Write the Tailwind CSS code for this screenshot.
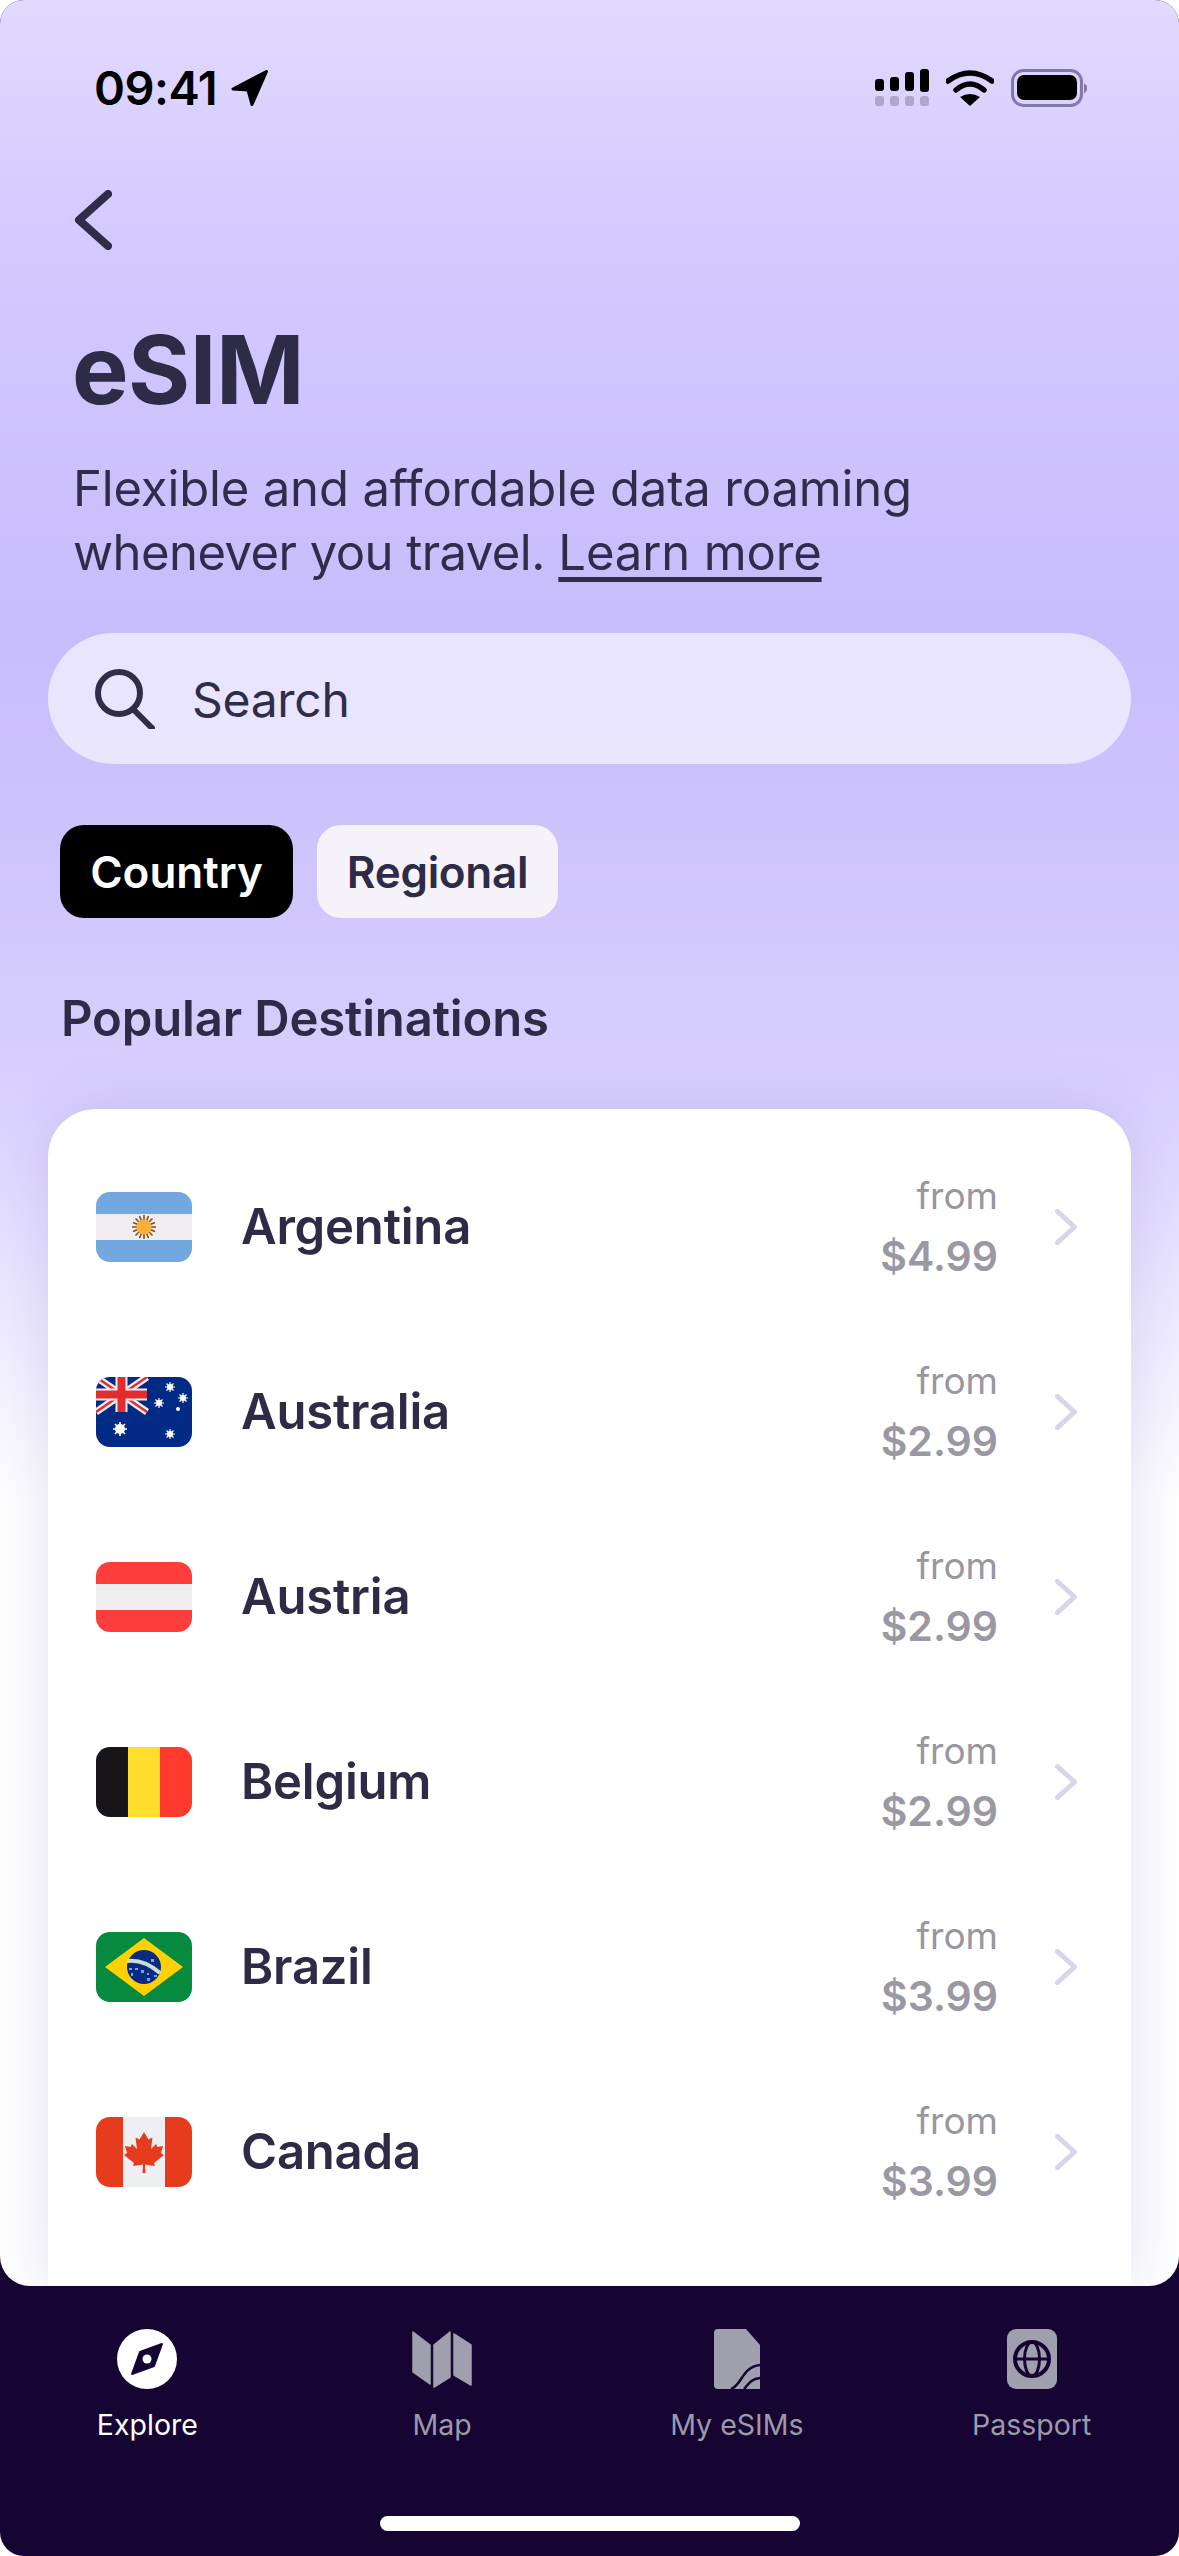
<!DOCTYPE html>
<html><head><meta charset="utf-8"><script src="https://cdn.jsdelivr.net/npm/@tailwindcss/browser@4"></script></head>
<body class="bg-white">
<div class="w-[1179px] h-[2556px] rounded-[24px] overflow-hidden bg-[#160533] flex flex-col font-['Inter',sans-serif]">
<main class="h-[2286px] shrink-0 rounded-b-[30px] overflow-hidden bg-[linear-gradient(180deg,#e3daff_0px,#d5cbff_200px,#cabffc_540px,#c8bdfc_640px,#ccc2fc_800px,#d8cfff_1080px,#ffffff_1500px)] flex flex-col">
  <div class="flex justify-between items-center h-[44px] mt-[66px] pl-[94px] pr-[92px]">
    <div class="flex items-center gap-[14px]">
      <span class="text-[47px] leading-[44px] font-semibold text-black tracking-[-0.5px]">09:41</span>
      <svg width="38" height="36" viewBox="0 0 38 36"><path d="M35.500 1.500 L2 19 L17 20 L21 34.500 Z" fill="#000" stroke="#000" stroke-width="3" stroke-linejoin="round"/></svg>
    </div>
    <div class="flex items-center gap-[17px]">
      <svg width="54" height="38" viewBox="0 0 54 38"><g fill="#000"><rect x="0" y="10" width="9" height="12" rx="3"/><rect x="15" y="8" width="9" height="14" rx="3"/><rect x="30" y="3" width="9" height="19" rx="3"/><rect x="45" y="0" width="9" height="23" rx="3"/></g><g fill="#000" opacity=".2"><rect x="0" y="27" width="9" height="10" rx="3"/><rect x="15" y="27" width="9" height="10" rx="3"/><rect x="30" y="27" width="9" height="10" rx="3"/><rect x="45" y="27" width="9" height="10" rx="3"/></g></svg>
      <svg width="48" height="36" viewBox="0 0 48 36"><path d="M2 11 Q24 -5 46 11" fill="none" stroke="#000" stroke-width="5.500" stroke-linecap="round"/><path d="M10 20 Q24 8 38 20" fill="none" stroke="#000" stroke-width="5.500" stroke-linecap="round"/><path d="M14 27 Q24 21 34 27 L24 36 Z" fill="#000"/></svg>
      <svg width="76" height="38" viewBox="0 0 76 38"><rect x="1.500" y="1.500" width="69" height="35" rx="11" fill="none" stroke="#8577a6" stroke-width="3"/><rect x="6" y="6" width="60" height="25" rx="7" fill="#000"/><path d="M73 14 L76 17 V21 L73 25 Z" fill="#8577a6"/></svg>
    </div>
  </div>
  <svg class="ml-[74px] mt-[80px]" width="38" height="60" viewBox="0 0 38 60"><path d="M34 4 L5 30 L34 56" fill="none" stroke="#2f2d4a" stroke-width="8" stroke-linecap="round" stroke-linejoin="round"/></svg>
  <h1 class="ml-[72px] mt-[70px] text-[95px] leading-[100px] font-bold text-[#2d2b45] tracking-[-0.5px]">eSIM</h1>
  <p class="ml-[73px] mt-[37px] text-[49px] leading-[64px] text-[#2f2d4a] tracking-[-0.15px]">Flexible and affordable data roaming<br><span class="tracking-[-0.55px]">whenever you travel.</span> <span class="underline underline-offset-[7px] decoration-[5px]">Learn more</span></p>
  <div class="mx-[48px] mt-[48px] h-[131px] shrink-0 rounded-full bg-white/60 flex items-center pl-[47px] gap-[37px]">
    <svg width="60" height="60" viewBox="0 0 60 60"><circle cx="24" cy="24" r="21" fill="none" stroke="#2f2d4a" stroke-width="6"/><path d="M39 41 L57 59" stroke="#2f2d4a" stroke-width="6" stroke-linecap="round"/></svg>
    <span class="text-[48px] text-[#2f2d4a] pt-[2px] tracking-[-0.3px]">Search</span>
  </div>
  <div class="flex gap-[24px] ml-[60px] mt-[61px]">
    <div class="w-[233px] h-[93px] rounded-[24px] bg-black text-white text-[44px] font-semibold flex items-center justify-center">Country</div>
    <div class="w-[241px] h-[93px] rounded-[24px] bg-[#f5f3f9] text-[#2d2b45] text-[44px] tracking-[-0.3px] font-semibold flex items-center justify-center">Regional</div>
  </div>
  <h2 class="ml-[61px] mt-[69px] text-[49px] leading-[64px] font-semibold text-[#2d2b45] tracking-[-0.15px]">Popular Destinations</h2>
  <div class="mx-[48px] mt-[58px] flex-1 bg-white rounded-t-[48px] shadow-[0_0_60px_rgba(70,50,140,0.15)] pt-[25px] flex flex-col">
    <div class="flex items-center h-[185px] shrink-0 pl-[48px] pr-[54px]">
      <div class="w-[96px] h-[70px] rounded-[14px] overflow-hidden shrink-0"><svg width="96" height="70" viewBox="0 0 96 70"><rect width="96" height="70" fill="#72a7e0"/><rect y="22" width="96" height="26" fill="#efedf0"/><g stroke="#8a4a10" stroke-width="1.600"><path d="M48 23V47M36 35H60M39.500 26.500L56.500 43.500M56.500 26.500L39.500 43.500M43.500 24L52.500 46M52.500 24L43.500 46M37 30.500L59 39.500M59 30.500L37 39.500"/></g><circle cx="48" cy="35" r="7.500" fill="#f9ae35"/></svg></div>
      <span class="ml-[49px] text-[49px] font-semibold text-[#2d2b45] flex-1 tracking-[-0.2px]">Argentina</span>
      <div class="text-right"><div class="text-[37px] leading-[58px] text-[#98969f]">from</div><div class="text-[41px] leading-[62px] font-semibold text-[#9a98a2]">$4.99</div></div>
      <svg class="ml-[57px]" width="22" height="36" viewBox="0 0 22 36"><path d="M2.500 2.500 L19.500 18 L2.500 33.500" fill="none" stroke="#d8d5ea" stroke-width="5" stroke-linecap="round" stroke-linejoin="round"/></svg>
    </div>
    <div class="flex items-center h-[185px] shrink-0 pl-[48px] pr-[54px]">
      <div class="w-[96px] h-[70px] rounded-[14px] overflow-hidden shrink-0"><svg width="96" height="70" viewBox="0 0 96 70"><rect width="96" height="70" fill="#012a85"/><path d="M0 0L51 35M51 0L0 35" stroke="#efedf0" stroke-width="7"/><path d="M0 0L51 35M51 0L0 35" stroke="#e22d2f" stroke-width="2.400"/><path d="M25.500 0V35M0 17.500H51" stroke="#efedf0" stroke-width="12"/><path d="M25.500 0V35M0 17.500H51" stroke="#e22d2f" stroke-width="8"/><g fill="#fff"><circle cx="24" cy="52" r="5"/><path d="M24 45V59M17 52H31M19 47L29 57M29 47L19 57" stroke="#fff" stroke-width="1.600"/><circle cx="74" cy="10" r="3"/><path d="M74 5V15M69 10H79M70.500 6.500L77.500 13.500M77.500 6.500L70.500 13.500" stroke="#fff" stroke-width="1.200"/><circle cx="63" cy="26" r="3"/><path d="M63 21V31M58 26H68M59.500 22.500L66.500 29.500M66.500 22.500L59.500 29.500" stroke="#fff" stroke-width="1.200"/><circle cx="87" cy="21" r="3"/><path d="M87 16V26M82 21H92M83.500 17.500L90.500 24.500M90.500 17.500L83.500 24.500" stroke="#fff" stroke-width="1.200"/><circle cx="82" cy="32" r="2"/><circle cx="74" cy="57" r="3"/><path d="M74 52V62M69 57H79M70.500 53.500L77.500 60.500M77.500 53.500L70.500 60.500" stroke="#fff" stroke-width="1.200"/></g></svg></div>
      <span class="ml-[49px] text-[49px] font-semibold text-[#2d2b45] flex-1 tracking-[-0.2px]">Australia</span>
      <div class="text-right"><div class="text-[37px] leading-[58px] text-[#98969f]">from</div><div class="text-[41px] leading-[62px] font-semibold text-[#9a98a2]">$2.99</div></div>
      <svg class="ml-[57px]" width="22" height="36" viewBox="0 0 22 36"><path d="M2.500 2.500 L19.500 18 L2.500 33.500" fill="none" stroke="#d8d5ea" stroke-width="5" stroke-linecap="round" stroke-linejoin="round"/></svg>
    </div>
    <div class="flex items-center h-[185px] shrink-0 pl-[48px] pr-[54px]">
      <div class="w-[96px] h-[70px] rounded-[14px] overflow-hidden shrink-0"><svg width="96" height="70" viewBox="0 0 96 70"><rect width="96" height="70" fill="#fd3e3c"/><rect y="22" width="96" height="26" fill="#efedf0"/></svg></div>
      <span class="ml-[49px] text-[49px] font-semibold text-[#2d2b45] flex-1 tracking-[-0.2px]">Austria</span>
      <div class="text-right"><div class="text-[37px] leading-[58px] text-[#98969f]">from</div><div class="text-[41px] leading-[62px] font-semibold text-[#9a98a2]">$2.99</div></div>
      <svg class="ml-[57px]" width="22" height="36" viewBox="0 0 22 36"><path d="M2.500 2.500 L19.500 18 L2.500 33.500" fill="none" stroke="#d8d5ea" stroke-width="5" stroke-linecap="round" stroke-linejoin="round"/></svg>
    </div>
    <div class="flex items-center h-[185px] shrink-0 pl-[48px] pr-[54px]">
      <div class="w-[96px] h-[70px] rounded-[14px] overflow-hidden shrink-0"><svg width="96" height="70" viewBox="0 0 96 70"><rect width="32" height="70" fill="#17151a"/><rect x="32" width="32" height="70" fill="#ffde2e"/><rect x="64" width="32" height="70" fill="#fd3a2c"/></svg></div>
      <span class="ml-[49px] text-[49px] font-semibold text-[#2d2b45] flex-1 tracking-[-0.2px]">Belgium</span>
      <div class="text-right"><div class="text-[37px] leading-[58px] text-[#98969f]">from</div><div class="text-[41px] leading-[62px] font-semibold text-[#9a98a2]">$2.99</div></div>
      <svg class="ml-[57px]" width="22" height="36" viewBox="0 0 22 36"><path d="M2.500 2.500 L19.500 18 L2.500 33.500" fill="none" stroke="#d8d5ea" stroke-width="5" stroke-linecap="round" stroke-linejoin="round"/></svg>
    </div>
    <div class="flex items-center h-[185px] shrink-0 pl-[48px] pr-[54px]">
      <div class="w-[96px] h-[70px] rounded-[14px] overflow-hidden shrink-0"><svg width="96" height="70" viewBox="0 0 96 70"><rect width="96" height="70" fill="#058a3f"/><path d="M48 6L87 35L48 64L9 35Z" fill="#ffd100"/><circle cx="48" cy="35" r="17" fill="#0a2a82"/><path d="M31 29Q48 27 64 41" fill="none" stroke="#c9e0d0" stroke-width="4"/><g fill="#62a8ee"><rect x="55" y="27" width="3" height="3"/><rect x="33" y="36" width="3" height="2"/><rect x="39" y="36" width="3" height="2"/><rect x="45" y="38" width="3" height="3"/><rect x="51" y="41" width="2" height="2"/><rect x="35" y="41" width="2" height="3"/><rect x="58" y="43" width="3" height="2"/><rect x="51" y="46" width="3" height="3"/></g></svg></div>
      <span class="ml-[49px] text-[49px] font-semibold text-[#2d2b45] flex-1 tracking-[-0.2px]">Brazil</span>
      <div class="text-right"><div class="text-[37px] leading-[58px] text-[#98969f]">from</div><div class="text-[41px] leading-[62px] font-semibold text-[#9a98a2]">$3.99</div></div>
      <svg class="ml-[57px]" width="22" height="36" viewBox="0 0 22 36"><path d="M2.500 2.500 L19.500 18 L2.500 33.500" fill="none" stroke="#d8d5ea" stroke-width="5" stroke-linecap="round" stroke-linejoin="round"/></svg>
    </div>
    <div class="flex items-center h-[185px] shrink-0 pl-[48px] pr-[54px]">
      <div class="w-[96px] h-[70px] rounded-[14px] overflow-hidden shrink-0"><svg width="96" height="70" viewBox="0 0 96 70"><rect width="96" height="70" fill="#e63b1d"/><rect x="27" width="42" height="70" fill="#eeeff2"/><path d="M48 15L52.500 22.500L56.500 20.500L55 32L60 27L61.500 30L67 29L65 36L68 38L58 46L59 49L49 47.500L49.500 56L46.500 56L47 47.500L37 49L38 46L28 38L31 36L29 29L34.500 30L36 27L41 32L39.500 20.500L43.500 22.500Z" fill="#e63b1d"/></svg></div>
      <span class="ml-[49px] text-[49px] font-semibold text-[#2d2b45] flex-1 tracking-[-0.2px]">Canada</span>
      <div class="text-right"><div class="text-[37px] leading-[58px] text-[#98969f]">from</div><div class="text-[41px] leading-[62px] font-semibold text-[#9a98a2]">$3.99</div></div>
      <svg class="ml-[57px]" width="22" height="36" viewBox="0 0 22 36"><path d="M2.500 2.500 L19.500 18 L2.500 33.500" fill="none" stroke="#d8d5ea" stroke-width="5" stroke-linecap="round" stroke-linejoin="round"/></svg>
    </div>
  </div>
</main>
<nav class="grid grid-cols-4 pt-[43px] text-[28.5px] leading-[40px] text-[#9c9aa8]">
  <div class="flex flex-col items-center gap-[16px] text-white">
    <svg width="60" height="60" viewBox="0 0 60 60"><circle cx="30" cy="30" r="30" fill="#fff"/><path d="M45 15L37 37L15 45L23 23Z" fill="#160533" stroke="#160533" stroke-width="2" stroke-linejoin="round"/><circle cx="30" cy="30" r="4.500" fill="#fff"/></svg>
    <span>Explore</span>
  </div>
  <div class="flex flex-col items-center gap-[16px]">
    <svg width="60" height="60" viewBox="0 0 60 60"><g fill="#a09fad" stroke="#a09fad" stroke-width="1.500" stroke-linejoin="round"><path d="M1 3L18 16V55L1 43Z"/><path d="M22 16L38 3V48L22 58Z"/><path d="M42 5L59 16V56L42 46Z"/></g></svg>
    <span>Map</span>
  </div>
  <div class="flex flex-col items-center gap-[16px]">
    <svg width="46" height="60" viewBox="0 0 46 60"><path d="M4 0H32L46 16V60H4A4 4 0 0 1 0 56V4A4 4 0 0 1 4 0Z" fill="#a09fad"/><path d="M17 60C28 56 28 38 46 36M30 60C34 56 36 50 46 49" fill="none" stroke="#160533" stroke-width="2.500"/></svg>
    <span>My eSIMs</span>
  </div>
  <div class="flex flex-col items-center gap-[16px]">
    <svg width="50" height="60" viewBox="0 0 50 60"><rect width="50" height="60" rx="9" fill="#a09fad"/><circle cx="25" cy="30" r="17" fill="none" stroke="#160533" stroke-width="4"/><ellipse cx="25" cy="30" rx="7.500" ry="17" fill="none" stroke="#160533" stroke-width="3"/><path d="M8 30H42" stroke="#160533" stroke-width="3"/></svg>
    <span>Passport</span>
  </div>
</nav>
<div class="w-[420px] h-[15px] rounded-full bg-white self-center mt-[71px] shrink-0"></div>
</div>
</body></html>
